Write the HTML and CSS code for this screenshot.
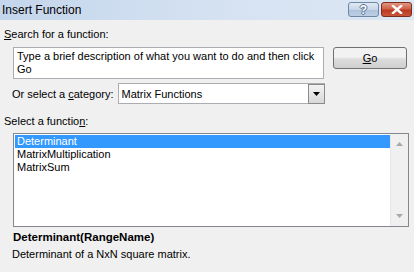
FILE: index.html
```html
<!DOCTYPE html>
<html lang="en">
<head>
  <meta charset="UTF-8" />
  <title>Insert Function</title>
  <link rel="stylesheet" href="styles.css">
</head>
<body>
  <div class="dialog">
    <!-- Title bar -->
    <div class="titlebar">
      <span class="title">Insert Function</span>
      <div class="caption-btns">
        <div class="cap cap-help">?</div>
        <div class="cap cap-close">
          <svg width="14" height="9" viewBox="0 0 14 9"><path d="M3 1 L11 8 M11 1 L3 8" stroke="#ffffff" stroke-width="2.4" stroke-linecap="square"/></svg>
        </div>
      </div>
    </div>

    <div class="content">
      <div class="label"><u>S</u>earch for a function:</div>
      <div class="search-row">
        <div class="textbox">Type a brief description of what you want to do and then click Go</div>
        <button class="btn"><u>G</u>o</button>
      </div>

      <div class="category-row">
        <span class="label">Or select a <u>c</u>ategory:</span>
        <div class="combo">
          <span class="combo-text">Matrix Functions</span>
          <span class="combo-arrow">
            <svg width="7" height="4" viewBox="0 0 7 4"><path d="M0 0 H7 L3.5 4 Z" fill="#000"/></svg>
          </span>
        </div>
      </div>

      <div class="label fn-label">Select a functio<u>n</u>:</div>
      <div class="listbox">
        <div class="items">
          <div class="item selected">Determinant</div>
          <div class="item">MatrixMultiplication</div>
          <div class="item">MatrixSum</div>
        </div>
        <div class="scrollbar">
          <svg width="7" height="4" viewBox="0 0 7 4"><path d="M3.5 0 L7 4 H0 Z" fill="#a9a9a9"/></svg>
          <svg width="7" height="4" viewBox="0 0 7 4"><path d="M0 0 H7 L3.5 4 Z" fill="#a9a9a9"/></svg>
        </div>
      </div>

      <div class="fn-name">Determinant(RangeName)</div>
      <div class="fn-desc">Determinant of a NxN square matrix.</div>
    </div>
  </div>
</body>
</html>
```

FILE: styles.css
```css
body {
  margin: 0;
  padding: 0;
  background: #f0f0f0;
  font-family: 'Liberation Sans', Arial, sans-serif;
  font-size: 11px;
  color: #000;
}
.dialog {
  width: 414px;
  height: 272px;
  overflow: hidden;
}
/* Title bar */
.titlebar {
  height: 20px;
  display: flex;
  align-items: center;
  justify-content: space-between;
  background: linear-gradient(to right, #c4d6ec, #d7e3f2 60%, #dce7f4);
}
.title {
  padding-left: 2px;
  font-size: 12px;
  color: #000;
}
.caption-btns {
  display: flex;
  gap: 2px;
  padding-right: 2px;
  align-self: flex-start;
  padding-top: 2px;
}
.cap {
  width: 29px;
  height: 13px;
  border-radius: 3px;
  display: flex;
  align-items: center;
  justify-content: center;
}
.cap-help {
  border: 1px solid #6f87a6;
  background: linear-gradient(#e2eaf4, #c6d5e7 50%, #aec3dc 55%, #bccee3);
  color: #ffffff;
  font-weight: bold;
  font-size: 12px;
  line-height: 12px;
  text-shadow: 1px 0 0 #55708f, -1px 0 0 #55708f, 0 1px 0 #55708f, 0 -1px 0 #55708f;
}
.cap-close {
  border: 1px solid #7e2e20;
  background-color: #c44a32;
  background-image: linear-gradient(#e39783, #cf6048 45%, #bb3a22 55%, #c9553b);
}
/* Content */
.content {
  padding: 7px 0 0 4px;
}
.label {
  line-height: 14px;
}
.search-row {
  display: flex;
  align-items: flex-start;
  margin-top: 6px;
  padding-left: 9px;
}
.textbox {
  width: 306px;
  height: 28px;
  border: 1px solid #abadb3;
  background: #fff;
  padding: 2px 0 0 3px;
  line-height: 13px;
  box-sizing: content-box;
}
.btn {
  margin-left: 9px;
  width: 74px;
  height: 22px;
  border: 1px solid #707070;
  border-radius: 3px;
  background: linear-gradient(#f2f2f2 45%, #dddddd 55%, #cfcfcf);
  font-family: inherit;
  font-size: 11px;
  padding: 0;
}
.category-row {
  display: flex;
  align-items: center;
  margin-top: 4px;
  padding-left: 8px;
  gap: 4px;
}
.combo {
  width: 205px;
  height: 19px;
  border: 1px solid #abadb3;
  background: #fff;
  display: flex;
  align-items: center;
  justify-content: space-between;
}
.combo-text {
  padding-left: 3px;
}
.combo-arrow {
  width: 15px;
  height: 18px;
  border: 1px solid #8a8a8a;
  margin-right: -1px;
  background: linear-gradient(#f3f3f3, #d8d8d8);
  display: flex;
  align-items: center;
  justify-content: center;
}
.fn-label {
  margin-top: 10px;
}
.listbox {
  margin: 5px 0 0 9px;
  width: 394px;
  height: 92px;
  border: 1px solid #828790;
  background: #fff;
  display: flex;
}
.items {
  flex: 1;
  padding: 1px 0 0 1px;
}
.item {
  height: 13px;
  line-height: 13px;
  padding-left: 2px;
}
.selected {
  background: #3399ff;
  color: #fff;
}
.scrollbar {
  width: 17px;
  background: #f0f0f0;
  border-left: 1px solid #e6e6e6;
  display: flex;
  flex-direction: column;
  justify-content: space-between;
  align-items: center;
  padding: 8px 0 8px;
}
.fn-name {
  margin: 3px 0 0 9px;
  font-weight: bold;
  font-size: 11.5px;
  line-height: 14px;
}
.fn-desc {
  margin: 3px 0 0 8px;
  line-height: 14px;
}
```
